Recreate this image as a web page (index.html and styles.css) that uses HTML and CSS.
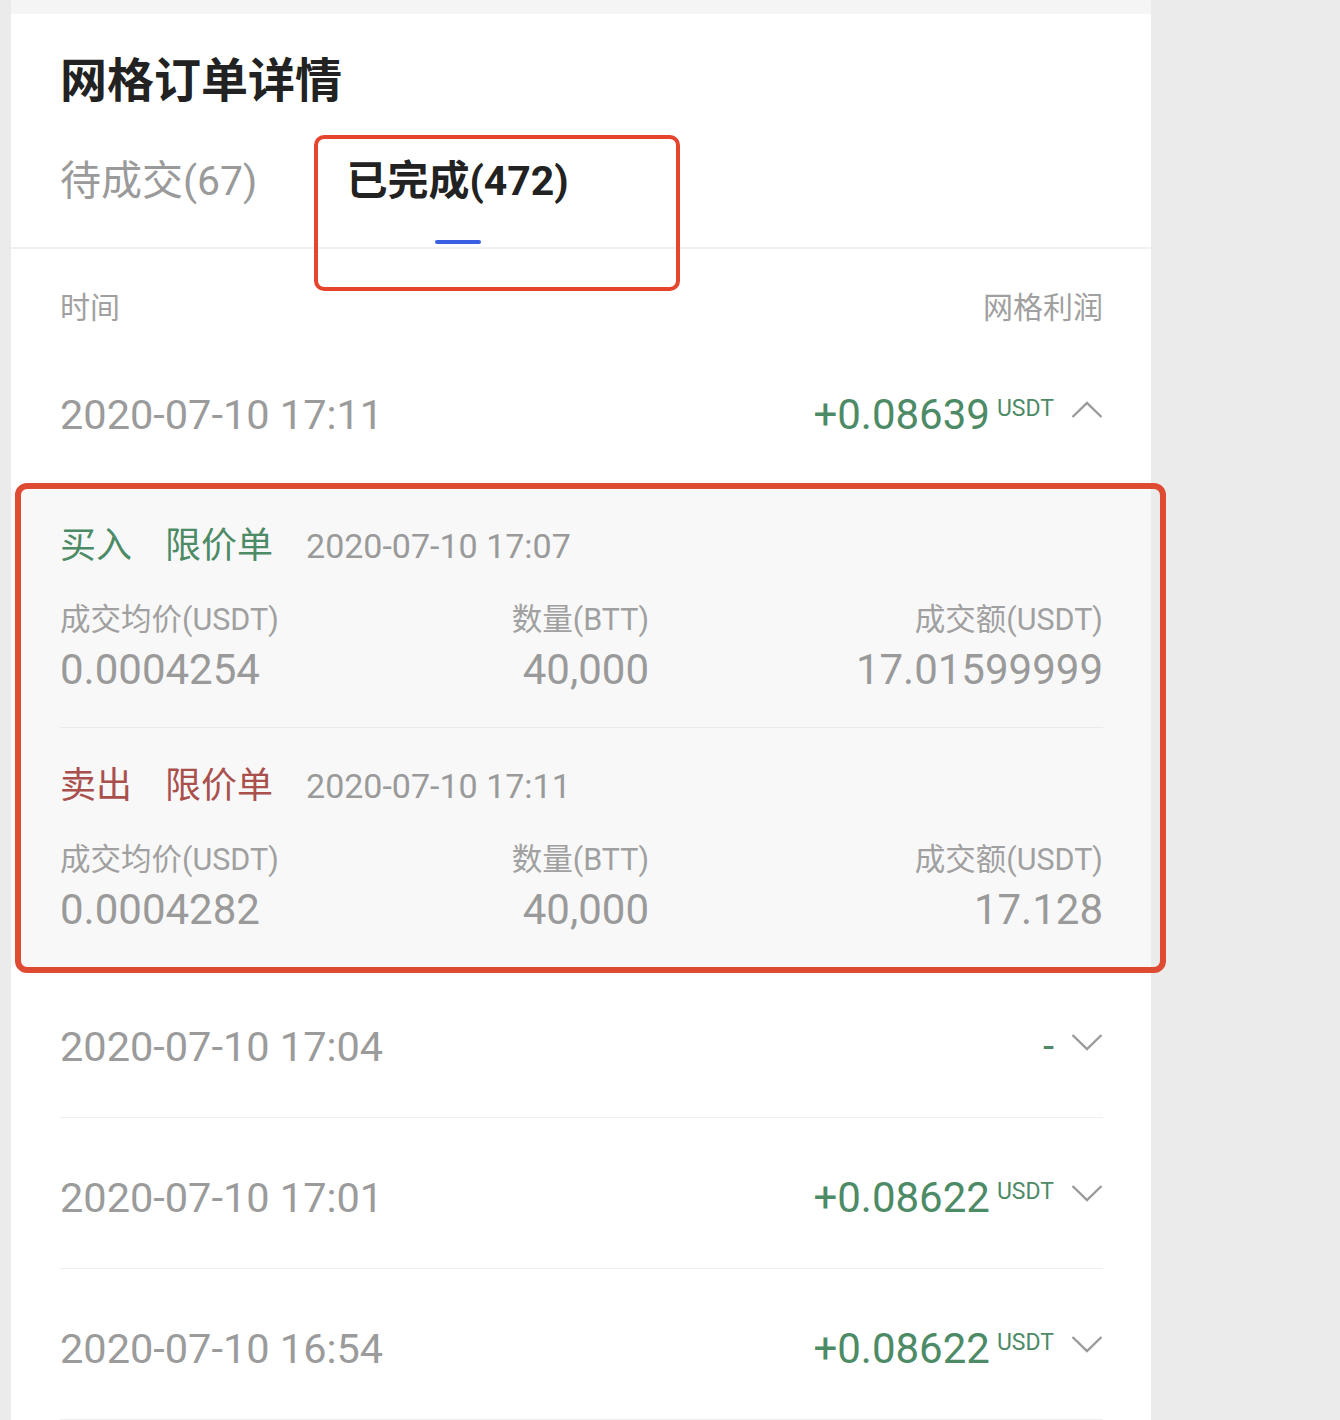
FILE: index.html
```html
<!DOCTYPE html>
<html lang="zh-CN">
<head>
<meta charset="utf-8">
<title>网格订单详情</title>
<link rel="stylesheet" href="styles.css">
</head>
<body>
<div class="page">
  <div class="gutter"></div>
  <main class="panel">
    <div class="top-strip"></div>
    <h1 class="title">网格订单详情</h1>
    <nav class="tabs">
      <div class="tab">待成交(67)<span class="bar"></span></div>
      <div class="tab active">已完成(472)<span class="bar"></span></div>
    </nav>
    <div class="list-head">
      <span>时间</span>
      <span>网格利润</span>
    </div>

    <div class="row open">
      <span class="time">2020-07-10 17:11</span>
      <span class="profit"><span class="num">+0.08639</span><span class="unit">USDT</span>
        <svg class="chev" viewBox="0 0 32 20"><polyline points="1.5,17 16,3 30.5,17"/></svg></span>
    </div>

    <section class="detail">
      <div class="trade">
        <div class="trade-head buy"><span class="side">买入</span><span class="type">限价单</span><span class="when">2020-07-10 17:07</span></div>
        <div class="grid">
          <span class="lbl c1">成交均价(USDT)</span><span class="lbl c2">数量(BTT)</span><span class="lbl c3">成交额(USDT)</span>
          <span class="val c1">0.0004254</span><span class="val c2">40,000</span><span class="val c3">17.01599999</span>
        </div>
      </div>
      <div class="trade second">
        <div class="trade-head sell"><span class="side">卖出</span><span class="type">限价单</span><span class="when">2020-07-10 17:11</span></div>
        <div class="grid">
          <span class="lbl c1">成交均价(USDT)</span><span class="lbl c2">数量(BTT)</span><span class="lbl c3">成交额(USDT)</span>
          <span class="val c1">0.0004282</span><span class="val c2">40,000</span><span class="val c3">17.128</span>
        </div>
      </div>
    </section>

    <div class="row closed">
      <span class="time">2020-07-10 17:04</span>
      <span class="profit"><span class="num dash">-</span>
        <svg class="chev" viewBox="0 0 32 20"><polyline points="1.5,3 16,17 30.5,3"/></svg></span>
    </div>
    <div class="row closed">
      <span class="time">2020-07-10 17:01</span>
      <span class="profit"><span class="num">+0.08622</span><span class="unit">USDT</span>
        <svg class="chev" viewBox="0 0 32 20"><polyline points="1.5,3 16,17 30.5,3"/></svg></span>
    </div>
    <div class="row closed">
      <span class="time">2020-07-10 16:54</span>
      <span class="profit"><span class="num">+0.08622</span><span class="unit">USDT</span>
        <svg class="chev" viewBox="0 0 32 20"><polyline points="1.5,3 16,17 30.5,3"/></svg></span>
    </div>
  </main>
  <div class="mark mark-tab"></div>
  <div class="mark mark-detail"></div>
</div>
</body>
</html>
```

FILE: styles.css
```css
html, body {
  margin: 0;
  padding: 0;
  background: #ebebeb;
}
body {
  font-family: Roboto, "Noto Sans CJK SC", sans-serif;
  color: #999;
}
.page {
  position: relative;
  display: flex;
  width: 1340px;
  height: 1420px;
  overflow: hidden;
}
.gutter {
  width: 11px;
  flex: none;
}
.panel {
  width: 1140px;
  flex: none;
  background: #fff;
  display: flex;
  flex-direction: column;
}
.top-strip {
  height: 14px;
  background: #f5f5f5;
}
.title {
  margin: 0;
  padding: 39px 0 0 49px;
  font-size: 47px;
  line-height: 56px;
  font-weight: 700;
  color: #222;
}
.tabs {
  display: flex;
  gap: 89px;
  padding: 47px 0 0 49px;
  border-bottom: 2px solid #f0f0f0;
}
.tab {
  display: flex;
  flex-direction: column;
  align-items: center;
  font-size: 41px;
  line-height: 50px;
  color: #9a9a9a;
}
.tab .bar {
  margin-top: 34px;
  margin-bottom: 3px;
  width: 46px;
  height: 4px;
  border-radius: 2px;
  background: transparent;
}
.tab.active {
  color: #222;
  font-weight: 700;
}
.tab.active .bar {
  background: #3b5fe3;
}
.list-head {
  display: flex;
  justify-content: space-between;
  padding: 44px 48px 16px 49px;
  font-size: 30px;
  line-height: 30px;
  color: #a0a0a0;
}
.row {
  display: flex;
  justify-content: space-between;
  align-items: center;
  margin: 0 48px 0 49px;
  height: 151px;
  box-sizing: border-box;
}
.row.closed {
  padding-top: 9px;
  border-bottom: 1px solid #eeeeee;
}
.row.closed:first-of-type {
  height: 152px;
}
.time {
  font-size: 41.5px;
  line-height: 50px;
  color: #9b9b9b;
}
.profit {
  display: flex;
  align-items: flex-start;
  color: #4d8a66;
}
.num {
  font-size: 42px;
  line-height: 50px;
}
.num.dash {
  font-size: 40px;
}
.unit {
  font-size: 23px;
  line-height: 22px;
  margin: 8px 0 0 7px;
}
.chev {
  width: 32px;
  height: 20px;
  margin: 10px 0 0 17px;
  fill: none;
  stroke: #9a9a9a;
  stroke-width: 2.4;
}
.detail {
  background: #f8f8f8;
  padding: 0 48px 0 49px;
}
.trade {
  padding: 36px 0 32px;
}
.trade.second {
  border-top: 1px solid #eaeaea;
  padding: 38px 0 32px;
}
.trade-head {
  display: flex;
  align-items: center;
  height: 40px;
}
.trade-head .side,
.trade-head .type {
  font-size: 36px;
  line-height: 40px;
  margin-right: 33px;
}
.trade-head.buy {
  color: #4d8a66;
}
.trade-head.sell {
  color: #a9504d;
}
.trade-head .when {
  font-size: 34px;
  line-height: 40px;
  color: #9a9a9a;
}
.grid {
  display: grid;
  grid-template-columns: 300px 289px 1fr;
  margin-top: 36px;
  row-gap: 7px;
}
.lbl {
  font-size: 30.5px;
  line-height: 36px;
  color: #a0a0a0;
}
.val {
  font-size: 42px;
  line-height: 50px;
  color: #9a9a9a;
}
.c1 { text-align: left; }
.c2 { text-align: right; }
.c3 { text-align: right; }
.mark {
  position: absolute;
  box-sizing: border-box;
  border: 4px solid #e6452d;
  pointer-events: none;
}
.mark-tab {
  left: 314px;
  top: 135px;
  width: 366px;
  height: 156px;
  border-radius: 10px;
}
.mark-detail {
  left: 15px;
  top: 483px;
  width: 1151px;
  height: 490px;
  border-width: 6px;
  border-radius: 12px;
  border-color: #df4a32;
}
```
